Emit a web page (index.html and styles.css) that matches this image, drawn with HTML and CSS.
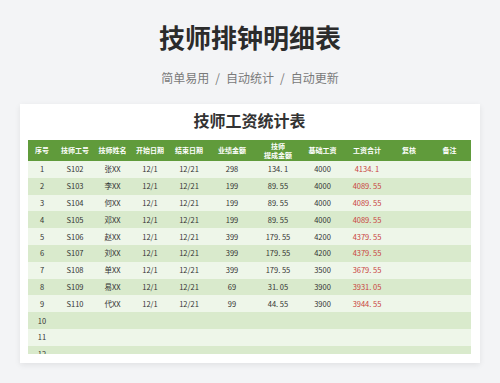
FILE: index.html
```html
<!DOCTYPE html>
<html lang="zh">
<head>
<meta charset="utf-8">
<link rel="stylesheet" href="styles.css">
</head>
<body>
<div class="page">
  <h1 class="title">技师排钟明细表</h1>
  <p class="subtitle">简单易用<span class="sep">/</span>自动统计<span class="sep">/</span>自动更新</p>
  <div class="card">
    <h2 class="card-title">技师工资统计表</h2>
    <div class="table-wrap">
      <table class="sheet">
        <colgroup>
          <col style="width:28px"><col style="width:38px"><col style="width:37px"><col style="width:38px"><col style="width:40px"><col style="width:46px"><col style="width:46px"><col style="width:43px"><col style="width:46px"><col style="width:38px"><col style="width:43px">
        </colgroup>
        <thead>
          <tr><th>序号</th><th>技师工号</th><th>技师姓名</th><th>开始日期</th><th>结束日期</th><th>业绩金额</th><th>技师<br>提成金额</th><th>基础工资</th><th>工资合计</th><th>复核</th><th>备注</th></tr>
        </thead>
        <tbody>
          <tr><td>1</td><td>S102</td><td>张XX</td><td>12/1</td><td>12/21</td><td>298</td><td>134. 1</td><td>4000</td><td class="red">4134. 1</td><td></td><td></td></tr>
          <tr><td>2</td><td>S103</td><td>李XX</td><td>12/1</td><td>12/21</td><td>199</td><td>89. 55</td><td>4000</td><td class="red">4089. 55</td><td></td><td></td></tr>
          <tr><td>3</td><td>S104</td><td>何XX</td><td>12/1</td><td>12/21</td><td>199</td><td>89. 55</td><td>4000</td><td class="red">4089. 55</td><td></td><td></td></tr>
          <tr><td>4</td><td>S105</td><td>邓XX</td><td>12/1</td><td>12/21</td><td>199</td><td>89. 55</td><td>4000</td><td class="red">4089. 55</td><td></td><td></td></tr>
          <tr><td>5</td><td>S106</td><td>赵XX</td><td>12/1</td><td>12/21</td><td>399</td><td>179. 55</td><td>4200</td><td class="red">4379. 55</td><td></td><td></td></tr>
          <tr><td>6</td><td>S107</td><td>刘XX</td><td>12/1</td><td>12/21</td><td>399</td><td>179. 55</td><td>4200</td><td class="red">4379. 55</td><td></td><td></td></tr>
          <tr><td>7</td><td>S108</td><td>单XX</td><td>12/1</td><td>12/21</td><td>399</td><td>179. 55</td><td>3500</td><td class="red">3679. 55</td><td></td><td></td></tr>
          <tr><td>8</td><td>S109</td><td>易XX</td><td>12/1</td><td>12/21</td><td>69</td><td>31. 05</td><td>3900</td><td class="red">3931. 05</td><td></td><td></td></tr>
          <tr><td>9</td><td>S110</td><td>代XX</td><td>12/1</td><td>12/21</td><td>99</td><td>44. 55</td><td>3900</td><td class="red">3944. 55</td><td></td><td></td></tr>
          <tr><td>10</td><td></td><td></td><td></td><td></td><td></td><td></td><td></td><td></td><td></td><td></td></tr>
          <tr><td>11</td><td></td><td></td><td></td><td></td><td></td><td></td><td></td><td></td><td></td><td></td></tr>
          <tr><td>12</td><td></td><td></td><td></td><td></td><td></td><td></td><td></td><td></td><td></td><td></td></tr>
        </tbody>
      </table>
    </div>
  </div>
</div>
</body>
</html>
```

FILE: styles.css
```css
* { box-sizing: border-box; }
html, body {
  margin: 0;
  padding: 0;
  background: #f3f4f6;
  font-family: "Noto Sans CJK SC", "Noto Sans", sans-serif;
  color: #333;
  overflow: hidden;
}
.page {
  width: 500px;
  height: 383px;
  padding-top: 22px;
}
.title {
  margin: 0;
  text-align: center;
  font-size: 26px;
  line-height: 30px;
  font-weight: 700;
  color: #2b2b2b;
}
.subtitle {
  margin: 18px 0 0;
  text-align: center;
  font-size: 12px;
  line-height: 16px;
  color: #7a7a7a;
}
.sep {
  margin: 0 6px;
}
.card {
  margin: 18px 20px 0;
  height: 259px;
  background: #fff;
  box-shadow: 0 2px 6px rgba(0, 0, 0, 0.08);
  padding: 6px 9px 9px 8px;
}
.card-title {
  margin: 0;
  text-align: center;
  font-size: 16px;
  line-height: 20px;
  font-weight: 700;
  color: #333;
}
.table-wrap {
  margin-top: 10px;
  height: 214px;
  overflow: hidden;
}
.sheet {
  width: 443px;
  border-collapse: collapse;
  table-layout: fixed;
  font-size: 7.5px;
}
.sheet th {
  background: #609b3b;
  color: #fff;
  font-weight: 700;
  height: 21px;
  padding: 0;
  line-height: 9px;
  font-size: 7px;
  text-align: center;
}
.sheet td {
  height: 16.8px;
  padding: 0;
  text-align: center;
  color: #333;
  line-height: 10px;
}
.sheet tbody tr:nth-child(odd) td { background: #eef6e9; }
.sheet tbody tr:nth-child(even) td { background: #d9eacc; }
.sheet td.red { color: #c9443f; }
```
